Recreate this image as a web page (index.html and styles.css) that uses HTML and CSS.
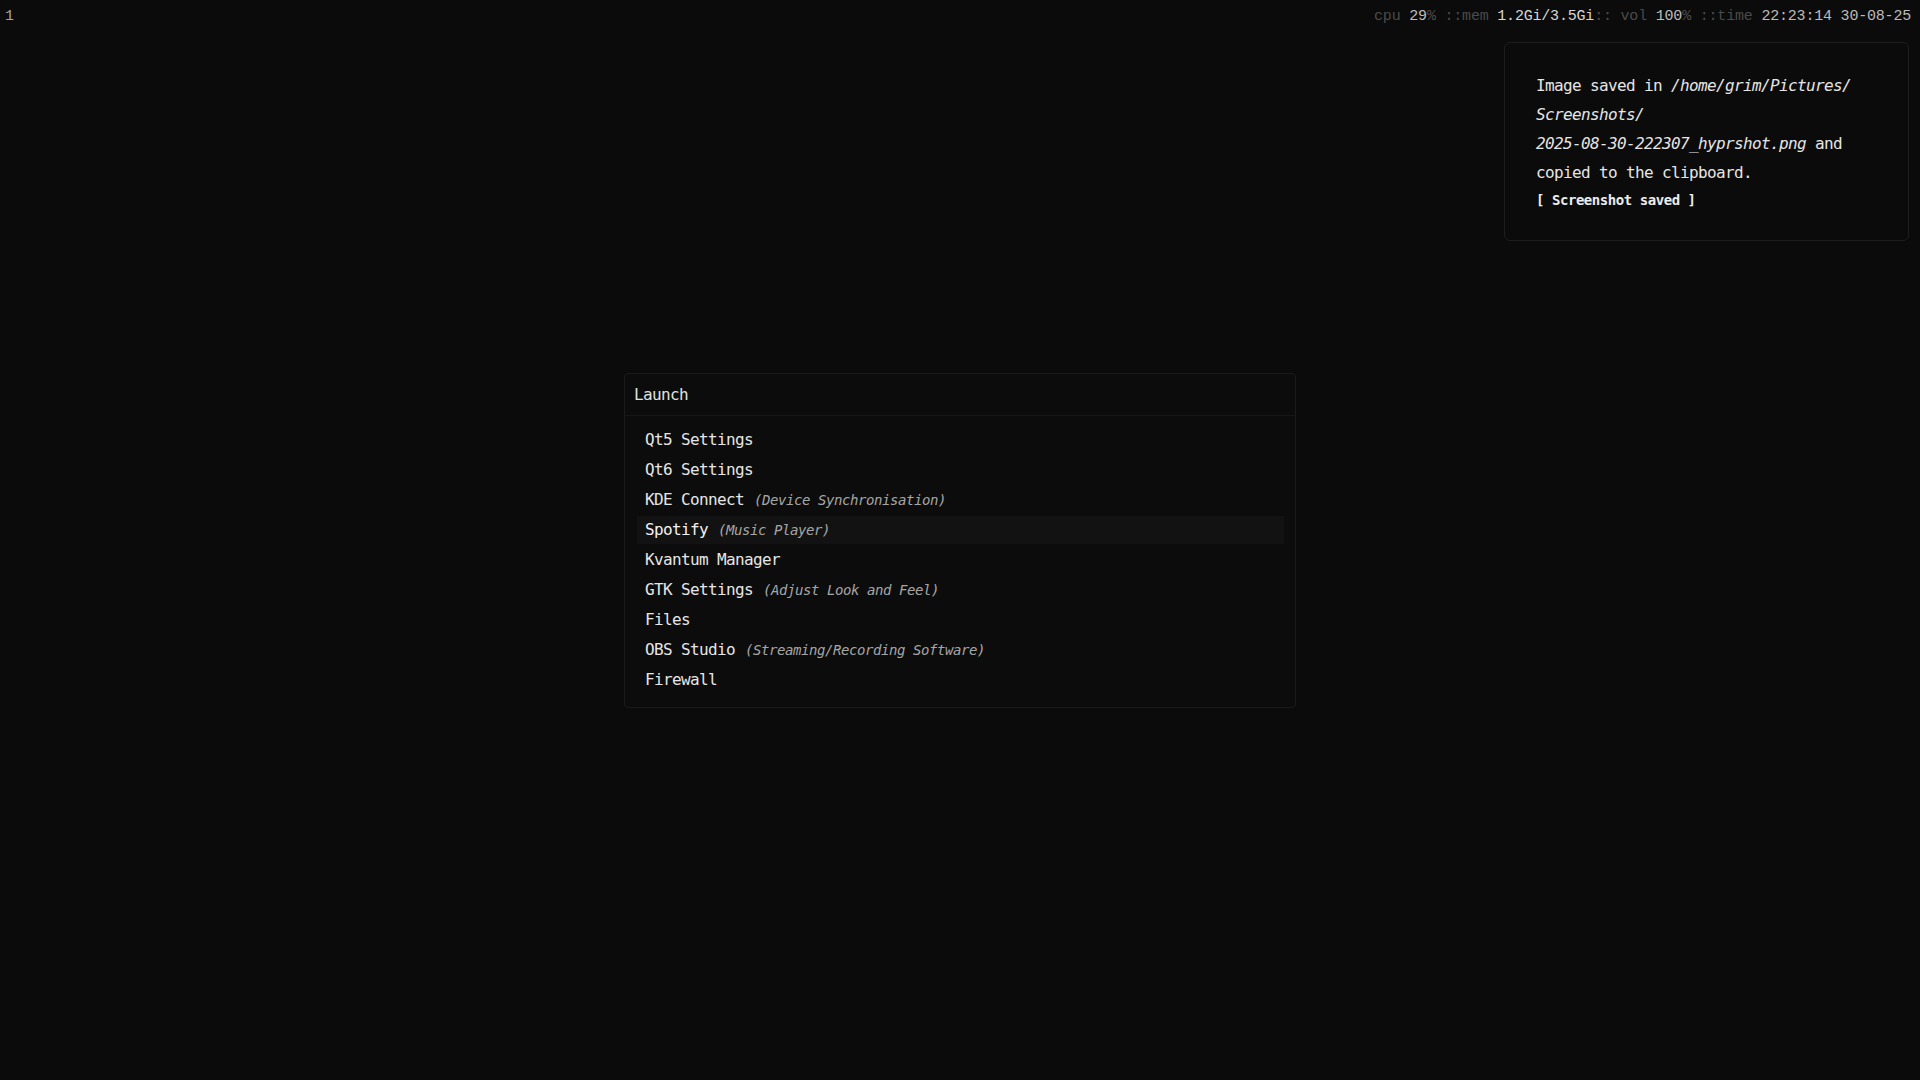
FILE: index.html
```html
<!DOCTYPE html>
<html lang="en">
<head>
<meta charset="utf-8">
<title>Desktop</title>
<link rel="stylesheet" href="styles.css">
</head>
<body>
<div class="screen">
  <header class="bar">
    <div class="workspaces"><span class="ws active">1</span></div>
    <div class="status"><span class="dim">cpu </span><span class="val">29</span><span class="dim">% ::mem </span><span class="val bright">1.2Gi/3.5Gi</span><span class="dim">:: vol </span><span class="val">100</span><span class="dim">% ::time </span><span class="val">22:23:14 30-08-25</span></div>
  </header>

  <main class="desk">
    <section class="launcher">
      <div class="launcher-head">Launch</div>
      <ul class="launcher-list">
        <li class="item">Qt5 Settings</li>
        <li class="item">Qt6 Settings</li>
        <li class="item">KDE Connect <span class="desc">(Device Synchronisation)</span></li>
        <li class="item selected">Spotify <span class="desc">(Music Player)</span></li>
        <li class="item">Kvantum Manager</li>
        <li class="item">GTK Settings <span class="desc">(Adjust Look and Feel)</span></li>
        <li class="item">Files</li>
        <li class="item">OBS Studio <span class="desc">(Streaming/Recording Software)</span></li>
        <li class="item">Firewall</li>
      </ul>
    </section>
  </main>

  <aside class="notification">
    <p class="note-body">Image saved in <em>/home/grim/Pictures/</em><br><em>Screenshots/</em><br><em>2025-08-30-222307_hyprshot.png</em> and<br>copied to the clipboard.</p>
    <p class="note-title">[ Screenshot saved ]</p>
  </aside>
</div>
</body>
</html>
```

FILE: styles.css
```css
html, body {
  margin: 0;
  padding: 0;
  background: #0b0b0b;
}

.screen {
  position: relative;
  width: 1920px;
  height: 1080px;
  display: flex;
  flex-direction: column;
  overflow: hidden;
  background: #0b0b0b;
}

/* ---------- top bar ---------- */
.bar {
  height: 33px;
  display: flex;
  align-items: center;
  justify-content: space-between;
  padding: 0 9px 0 5px;
  font-family: "Liberation Mono", monospace;
  font-size: 15px;
  line-height: 17px;
  flex: none;
}

.ws {
  color: #a4a4a4;
}

.status {
  white-space: pre;
  letter-spacing: -0.2px;
}

.dim {
  color: #4a4a4a;
}

.val {
  color: #bcbcbc;
}

.val.bright {
  color: #d6d6d6;
}

/* ---------- desktop ---------- */
.desk {
  flex: 1;
  display: flex;
  align-items: center;
  justify-content: center;
  padding-bottom: 33px;
}

/* ---------- launcher ---------- */
.launcher {
  width: 670px;
  border: 1px solid #1a1a1a;
  border-radius: 4px;
  background: #0c0c0c;
  font-family: "DejaVu Sans Mono", monospace;
  color: #e4e4e4;
}

.launcher-head {
  height: 41px;
  display: flex;
  align-items: center;
  padding-left: 9px;
  font-size: 16px;
  letter-spacing: -0.63px;
  border-bottom: 1px solid #171717;
  color: #e0e0e0;
}

.launcher-list {
  list-style: none;
  margin: 0;
  padding: 10px 11px 13px 12px;
  display: flex;
  flex-direction: column;
  gap: 2px;
}

.item {
  height: 28px;
  display: flex;
  align-items: center;
  padding-left: 8px;
  font-size: 16px;
  letter-spacing: -0.63px;
  white-space: pre;
  color: #e6e6e6;
}

.item.selected {
  background: #121212;
  color: #f2f2f2;
}

.desc {
  font-size: 14px;
  font-style: italic;
  letter-spacing: -0.43px;
  color: #a6a6a6;
  margin-left: 1px;
}

/* ---------- notification ---------- */
.notification {
  position: absolute;
  top: 42px;
  right: 11px;
  width: 342px;
  padding: 28px 30px 26px 31px;
  border: 1px solid #1e1e1e;
  border-radius: 6px;
  background: #0b0b0b;
  font-family: "DejaVu Sans Mono", monospace;
  color: #e6e6e6;
}

.note-body {
  margin: 0;
  font-size: 16px;
  line-height: 29px;
  letter-spacing: -0.63px;
  white-space: nowrap;
}

.note-body em {
  font-style: italic;
}

.note-title {
  margin: 0;
  font-size: 14px;
  line-height: 27px;
  font-weight: bold;
  letter-spacing: -0.45px;
  color: #ececec;
  white-space: pre;
}
```
